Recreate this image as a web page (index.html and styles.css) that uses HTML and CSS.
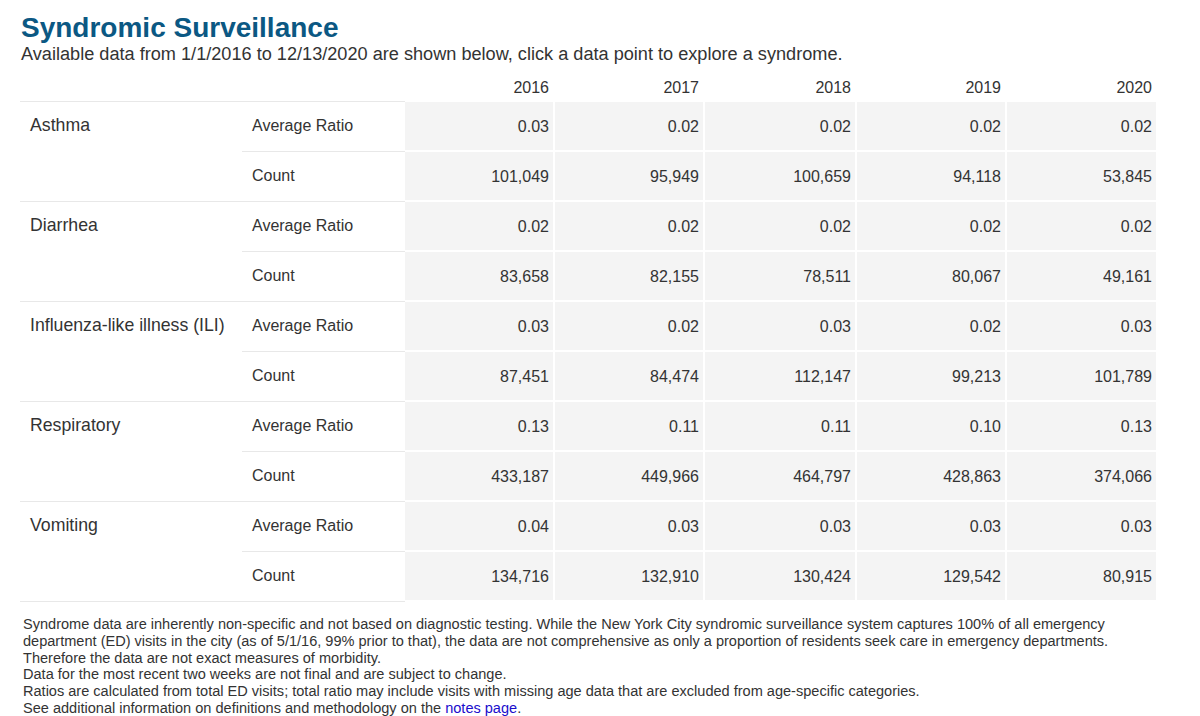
FILE: index.html
```html
<!DOCTYPE html>
<html lang="en">
<head>
<meta charset="utf-8">
<title>Syndromic Surveillance</title>
<link rel="stylesheet" href="styles.css">
</head>
<body>
<div class="page">
  <header class="head">
    <h1 class="title">Syndromic Surveillance</h1>
    <p class="subtitle">Available data from 1/1/2016 to 12/13/2020 are shown below, click a data point to explore a syndrome.</p>
  </header>
  <table class="grid">
    <colgroup>
      <col class="c-name"><col class="c-metric">
      <col class="c-y1"><col class="c-y2"><col class="c-y3"><col class="c-y4"><col class="c-y5">
    </colgroup>
    <thead>
      <tr>
        <th class="hlab"></th><th class="hlab"></th>
        <th class="year">2016</th><th class="year">2017</th><th class="year">2018</th><th class="year">2019</th><th class="year">2020</th>
      </tr>
    </thead>
    <tbody>
      <tr>
        <td class="name" rowspan="2">Asthma</td><td class="metric">Average Ratio</td>
        <td class="val">0.03</td><td class="val">0.02</td><td class="val">0.02</td><td class="val">0.02</td><td class="val">0.02</td>
      </tr>
      <tr>
        <td class="metric">Count</td>
        <td class="val">101,049</td><td class="val">95,949</td><td class="val">100,659</td><td class="val">94,118</td><td class="val">53,845</td>
      </tr>
      <tr>
        <td class="name" rowspan="2">Diarrhea</td><td class="metric">Average Ratio</td>
        <td class="val">0.02</td><td class="val">0.02</td><td class="val">0.02</td><td class="val">0.02</td><td class="val">0.02</td>
      </tr>
      <tr>
        <td class="metric">Count</td>
        <td class="val">83,658</td><td class="val">82,155</td><td class="val">78,511</td><td class="val">80,067</td><td class="val">49,161</td>
      </tr>
      <tr>
        <td class="name" rowspan="2">Influenza-like illness (ILI)</td><td class="metric">Average Ratio</td>
        <td class="val">0.03</td><td class="val">0.02</td><td class="val">0.03</td><td class="val">0.02</td><td class="val">0.03</td>
      </tr>
      <tr>
        <td class="metric">Count</td>
        <td class="val">87,451</td><td class="val">84,474</td><td class="val">112,147</td><td class="val">99,213</td><td class="val">101,789</td>
      </tr>
      <tr>
        <td class="name" rowspan="2">Respiratory</td><td class="metric">Average Ratio</td>
        <td class="val">0.13</td><td class="val">0.11</td><td class="val">0.11</td><td class="val">0.10</td><td class="val">0.13</td>
      </tr>
      <tr>
        <td class="metric">Count</td>
        <td class="val">433,187</td><td class="val">449,966</td><td class="val">464,797</td><td class="val">428,863</td><td class="val">374,066</td>
      </tr>
      <tr>
        <td class="name" rowspan="2">Vomiting</td><td class="metric">Average Ratio</td>
        <td class="val">0.04</td><td class="val">0.03</td><td class="val">0.03</td><td class="val">0.03</td><td class="val">0.03</td>
      </tr>
      <tr>
        <td class="metric">Count</td>
        <td class="val">134,716</td><td class="val">132,910</td><td class="val">130,424</td><td class="val">129,542</td><td class="val">80,915</td>
      </tr>
    </tbody>
  </table>
  <div class="notes">
    <p class="note">Syndrome data are inherently non-specific and not based on diagnostic testing. While the New York City syndromic surveillance system captures 100% of all emergency department (ED) visits in the city (as of 5/1/16, 99% prior to that), the data are not comprehensive as only a proportion of residents seek care in emergency departments. Therefore the data are not exact measures of morbidity.</p>
    <p class="note">Data for the most recent two weeks are not final and are subject to change.</p>
    <p class="note">Ratios are calculated from total ED visits; total ratio may include visits with missing age data that are excluded from age-specific categories.</p>
    <p class="note">See additional information on definitions and methodology on the <a class="link" href="#notes">notes page</a>.</p>
  </div>
</div>
</body>
</html>
```

FILE: styles.css
```css
html, body {
  margin: 0;
  padding: 0;
  background: #ffffff;
}

body {
  font-family: "Liberation Sans", Arial, sans-serif;
  color: #333333;
}

.page {
  padding: 12px 0 0 20px;
}

.head {
  padding-left: 1px;
}

.title {
  margin: 0;
  font-size: 28px;
  line-height: 32px;
  font-weight: bold;
  color: #0b5883;
}

.subtitle {
  margin: 0;
  font-size: 18.15px;
  line-height: 21px;
  color: #333333;
}

.grid {
  table-layout: fixed;
  border-collapse: separate;
  border-spacing: 0;
  width: 1138px;
  margin-top: 9px;
  font-size: 16px;
}

.c-name { width: 222px; }
.c-metric { width: 163px; }
.c-y1 { width: 150px; }
.c-y2 { width: 150px; }
.c-y3 { width: 152px; }
.c-y4 { width: 150px; }
.c-y5 { width: 151px; }

.hlab {
  padding: 0;
  height: 27px;
  border-bottom: 1px solid #e8e8e8;
}

.year {
  padding: 5px 6px 5px 0;
  text-align: right;
  vertical-align: top;
  font-weight: normal;
  line-height: 18px;
}

.name {
  vertical-align: top;
  padding: 13px 8px 0 10px;
  font-size: 17.7px;
  line-height: 20px;
  border-bottom: 1px solid #e8e8e8;
}

.metric {
  vertical-align: top;
  padding: 14px 8px 15px 10px;
  line-height: 20px;
  height: 20px;
  border-bottom: 1px solid #e8e8e8;
}

.val {
  background: #f4f4f4;
  text-align: right;
  vertical-align: top;
  padding: 15px 4px 13px 0;
  line-height: 20px;
  height: 20px;
  border-right: 2px solid #ffffff;
  border-bottom: 2px solid #ffffff;
}

.notes {
  margin-top: 14px;
  width: 1110px;
  padding-left: 3px;
  font-size: 14.55px;
  line-height: 16.8px;
}

.note {
  margin: 0;
}

.link {
  color: #1a0dcc;
  text-decoration: none;
}
```
